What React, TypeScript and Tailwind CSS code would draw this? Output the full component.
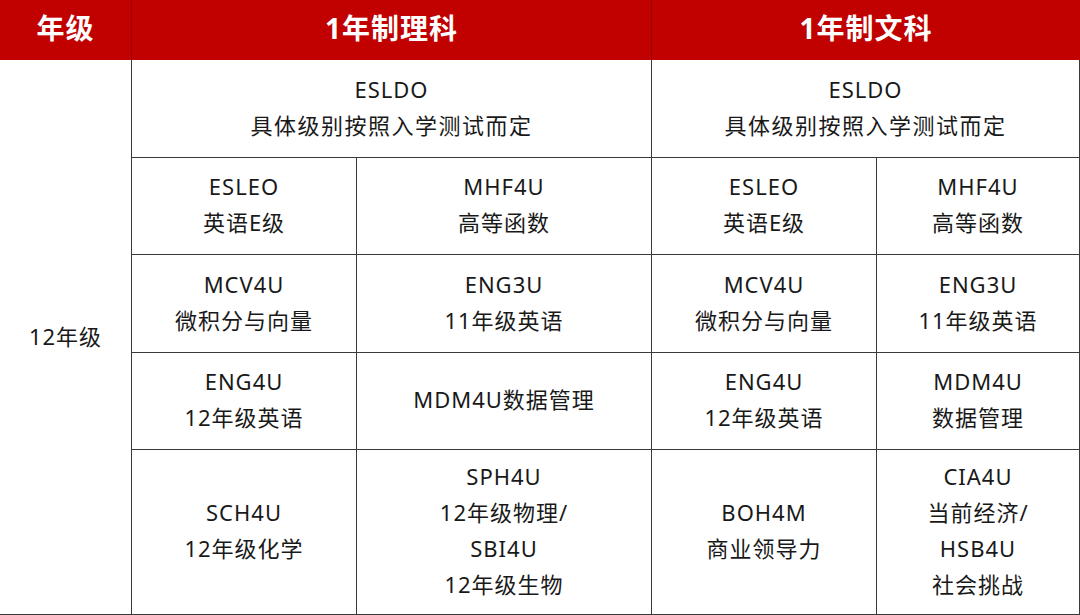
const cellBase =
  "flex flex-col items-center justify-center border-l border-[#3a3a3a] pb-[4px] text-center leading-[36px]";

type Row = { cells: string[][] };

const rows: Row[] = [
  {
    cells: [
      ["ESLEO", "英语E级"],
      ["MHF4U", "高等函数"],
      ["ESLEO", "英语E级"],
      ["MHF4U", "高等函数"],
    ],
  },
  {
    cells: [
      ["MCV4U", "微积分与向量"],
      ["ENG3U", "11年级英语"],
      ["MCV4U", "微积分与向量"],
      ["ENG3U", "11年级英语"],
    ],
  },
  {
    cells: [
      ["ENG4U", "12年级英语"],
      ["MDM4U数据管理"],
      ["ENG4U", "12年级英语"],
      ["MDM4U", "数据管理"],
    ],
  },
  {
    cells: [
      ["SCH4U", "12年级化学"],
      ["SPH4U", "12年级物理/", "SBI4U", "12年级生物"],
      ["BOH4M", "商业领导力"],
      ["CIA4U", "当前经济/", "HSB4U", "社会挑战"],
    ],
  },
];

function Lines({ lines }: { lines: string[] }) {
  return (
    <>
      {lines.map((l, i) => (
        <span key={i} className="tracking-[1px]">
          {l}
        </span>
      ))}
    </>
  );
}

export default function App() {
  return (
    <div
      className="grid h-[615px] w-[1080px] grid-cols-[131px_225px_295px_225px_204px] grid-rows-[60px_97px_97px_98px_97px_165px] border-b border-[#3a3a3a] bg-white text-[22px] text-[#191919]"
      style={{ fontFamily: '"Noto Sans", "Noto Sans CJK SC", sans-serif' }}
    >
      {/* Header */}
      <div className="flex items-center justify-center bg-[#c10000] pb-1 text-[28px] font-bold tracking-[1px] text-white">
        年级
      </div>
      <div className="col-span-2 flex items-center justify-center border-l border-[#9c0000] bg-[#c10000] pb-1 text-[28px] font-bold tracking-[1px] text-white">
        1年制理科
      </div>
      <div className="col-span-2 flex items-center justify-center border-l border-[#9c0000] bg-[#c10000] pb-1 text-[28px] font-bold tracking-[1px] text-white">
        1年制文科
      </div>

      {/* Grade column */}
      <div className="row-span-5 flex items-center justify-center pb-[2px] tracking-[1px]">12年级</div>

      {/* ESLDO row */}
      <div className={`${cellBase} col-span-2`}>
        <span className="tracking-[1px]">ESLDO</span>
        <span className="tracking-[1.5px]">具体级别按照入学测试而定</span>
      </div>
      <div className={`${cellBase} col-span-2 border-r`}>
        <span className="tracking-[1px]">ESLDO</span>
        <span className="tracking-[1.5px]">具体级别按照入学测试而定</span>
      </div>

      {rows.map((row, r) =>
        row.cells.map((lines, c) => (
          <div
            key={`${r}-${c}`}
            className={`${cellBase} border-t ${c === 3 ? "border-r" : ""}`}
          >
            <Lines lines={lines} />
          </div>
        )),
      )}
    </div>
  );
}
